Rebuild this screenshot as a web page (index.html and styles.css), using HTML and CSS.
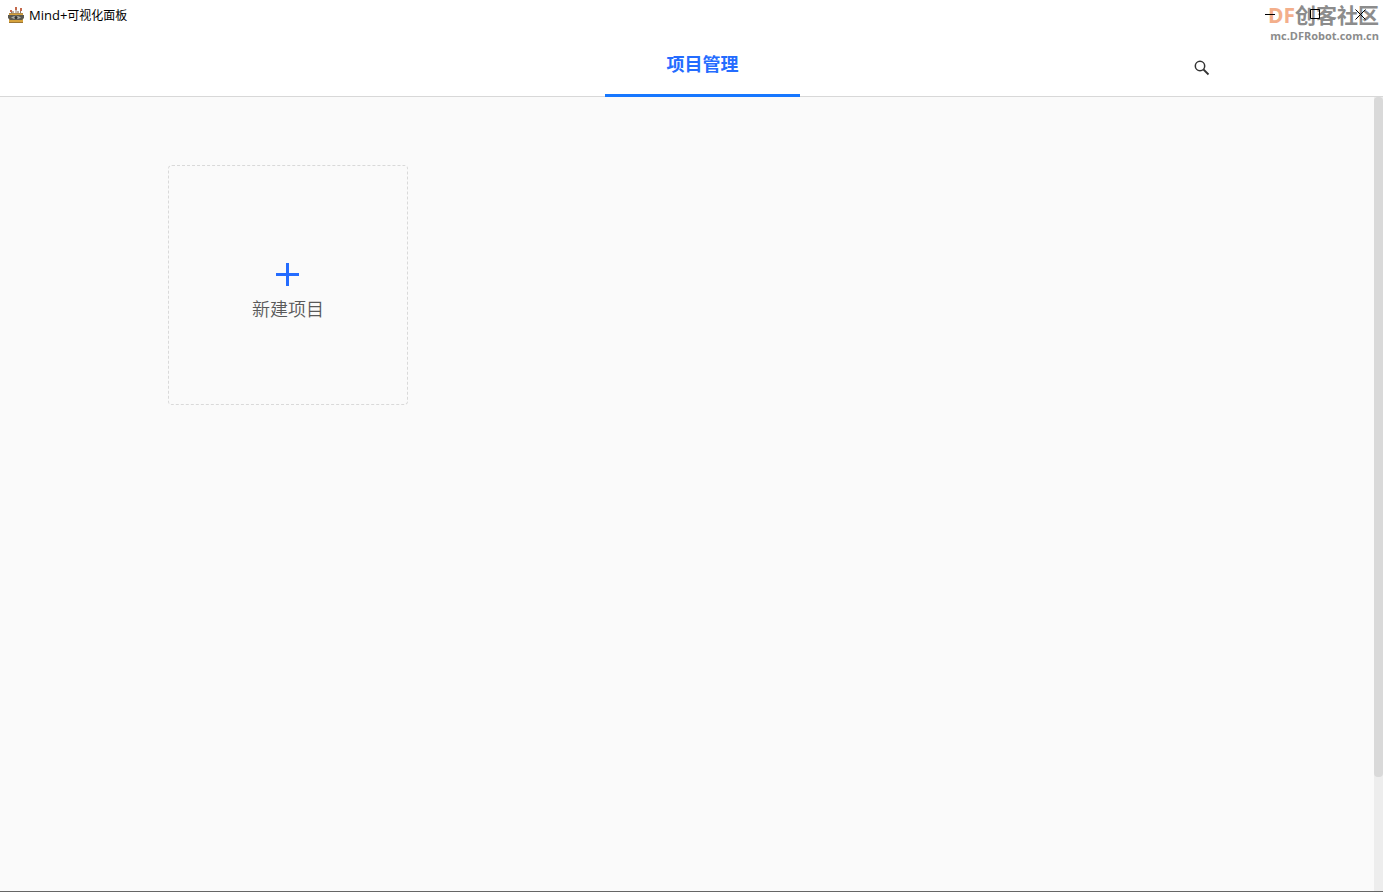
FILE: index.html
```html
<!DOCTYPE html>
<html lang="zh-CN">
<head>
<meta charset="utf-8">
<title>Mind+可视化面板</title>
<link rel="stylesheet" href="styles.css">
</head>
<body>
<div class="window">
  <div class="titlebar">
    <svg class="app-icon" width="16" height="18" viewBox="0 0 16 18" aria-hidden="true">
      <path d="M3.500 8V4.500M8 8V3M12.500 8V4.500" stroke="#8d7768" stroke-width="1"/>
      <path d="M2 4h2v2H2zM7 1h2v3H7zM12 2h2v3h-2z" fill="#c4694c"/>
      <path d="M4 5h2v2H4zM9 5h2v2H9z" fill="#b9a99c"/>
      <path d="M1 7h14v10H1z" fill="#d6a23c"/>
      <path d="M1 7h14v1H1z" fill="#b28a4a"/>
      <path d="M1 16h14v1H1z" fill="#9a7535"/>
      <path d="M0 9h16v3l-2 2H2l-2-2z" fill="#5c594f"/>
      <path d="M3 11.500q5-3.500 10 0-5 3-10 0z" fill="#a9aaa5"/>
      <circle cx="8" cy="11.500" r="1.500" fill="#30302e"/>
    </svg>
    <span class="app-name"><span class="app-latin">Mind+</span>可视化面板</span>
    <div class="controls">
      <button class="control" aria-label="最小化"><svg width="11" height="11" viewBox="0 0 11 11"><path d="M0 5.500h10" stroke="#000"/></svg></button>
      <button class="control" aria-label="最大化"><svg width="11" height="11" viewBox="0 0 11 11"><path d="M.5.500h9v9h-9z" fill="none" stroke="#000"/></svg></button>
      <button class="control" aria-label="关闭"><svg width="11" height="11" viewBox="0 0 11 11"><path d="M.5.500l10 10M10.500.500l-10 10" stroke="#000"/></svg></button>
    </div>
  </div>
  <header class="header">
    <button class="tab">项目管理</button>
    <button class="search" aria-label="搜索">
      <svg width="16" height="16" viewBox="0 0 16 16"><circle cx="6" cy="6" r="4.700" fill="none" stroke="#333" stroke-width="1.500"/><path d="M9.500 9.500l5 5" stroke="#333" stroke-width="1.800"/></svg>
    </button>
  </header>
  <div class="body">
    <main class="projects">
      <button class="new-project">
        <svg width="24" height="24" viewBox="0 0 24 24" aria-hidden="true"><path d="M0 12.500h23M11.500 1v23" stroke="#246cff" stroke-width="3"/></svg>
        <span>新建项目</span>
      </button>
    </main>
    <div class="scrollbar"><div class="thumb"></div></div>
  </div>
  <div class="watermark">
    <div class="brand"><span class="brand-df">DF</span>创客社区</div>
    <div class="site">mc.DFRobot.com.cn</div>
  </div>
</div>
</body>
</html>
```
FILE: styles.css
```css
* { box-sizing: border-box; }
body {
  margin: 0;
  font-family: "Open Sans", "Noto Sans CJK SC", sans-serif;
  color: #000;
}
button {
  padding: 0;
  border: 0;
  background: none;
  font-family: inherit;
}
svg { display: block; }
.window {
  position: relative;
  display: flex;
  flex-direction: column;
  height: 100vh;
  background: #fff;
  border-bottom: 1px solid #666;
}
.titlebar {
  display: flex;
  align-items: center;
  height: 30px;
  padding-left: 8px;
  gap: 5px;
}
.app-name {
  font-size: 12px;
  line-height: 18px;
}
.app-latin { font-size: 13px; }
.controls {
  position: relative;
  z-index: 1;
  display: flex;
  align-self: flex-start;
  margin-left: auto;
}
.control {
  display: flex;
  align-items: center;
  justify-content: center;
  width: 45px;
  height: 29px;
}
.header {
  display: grid;
  grid-template-columns: 1fr 195px 1fr;
  height: 67px;
  padding-left: 22px;
  border-bottom: 1px solid #d8d8d8;
}
.tab {
  grid-column: 2;
  height: 67px;
  padding-top: 4px;
  border-bottom: 3px solid #1677ff;
  color: #246cff;
  font-size: 18px;
  font-weight: 700;
  line-height: 24px;
}
.search {
  display: flex;
  align-items: center;
  justify-content: center;
  justify-self: end;
  width: 32px;
  height: 32px;
  margin: 22px 165px 0 0;
}
.body {
  display: flex;
  flex: 1;
  min-height: 0;
  background: #fafafa;
}
.projects {
  flex: 1;
  padding: 68px 168px;
}
.new-project {
  display: flex;
  flex-direction: column;
  align-items: center;
  justify-content: center;
  gap: 11px;
  width: 240px;
  height: 240px;
  padding-top: 13px;
  border: 1px dashed #d9d9d9;
  border-radius: 4px;
  color: #595959;
  font-size: 18px;
  font-weight: 350;
  line-height: 24px;
}
.scrollbar {
  width: 9px;
  background: #ededed;
}
.thumb {
  height: 85.7%;
  border-radius: 4px;
  background: #d9d9d9;
}
.watermark {
  position: absolute;
  top: 3px;
  right: 4px;
  font-weight: 700;
  color: #808080;
  opacity: 0.9;
  pointer-events: none;
}
.brand {
  font-size: 21px;
  line-height: 24px;
  text-align: right;
}
.brand-df { color: #f2a77f; }
.site {
  font-size: 11px;
  line-height: 18px;
  text-align: right;
}
```
